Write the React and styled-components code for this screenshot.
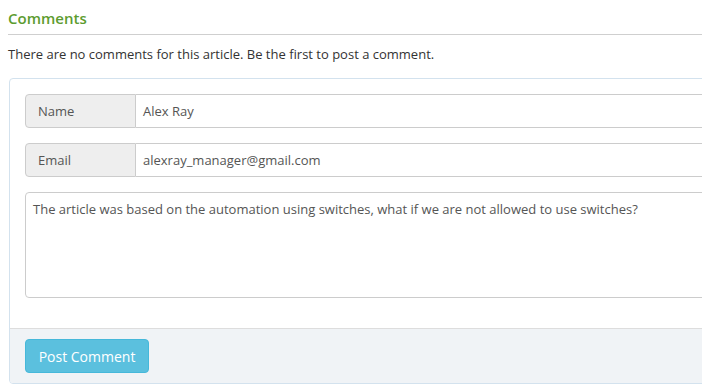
import React from "react";
import styled, { createGlobalStyle } from "styled-components";

const GlobalStyle = createGlobalStyle`
  html, body {
    margin: 0;
    padding: 0;
    overflow: hidden;
    background: #fff;
  }
  body {
    font-family: "Open Sans", "Liberation Sans", sans-serif;
    font-size: 13px;
    color: #333;
  }
`;

const Section = styled.section`
  width: 760px;
  padding: 6px 0 0 8px;
`;

const Title = styled.h3`
  margin: 0;
  padding: 2px 0 6px;
  font-size: 15px;
  font-weight: 600;
  color: #5d9c2f;
  border-bottom: 1px solid #cfcfcf;
  width: 694px;
`;

const Notice = styled.p`
  margin: 9px 0 0;
  line-height: 20px;
  color: #333;
`;

const Panel = styled.div`
  margin: 14px 0 0 1px;
  border: 1px solid #d3e2ee;
  border-radius: 4px;
  background: #fff;
  overflow: hidden;
`;

const PanelBody = styled.div`
  padding: 15px;
  display: flex;
  flex-direction: column;
  gap: 15px;
`;

const InputGroup = styled.div`
  display: flex;
  height: 34px;
`;

const Addon = styled.span`
  box-sizing: border-box;
  width: 111px;
  padding: 0 12px;
  display: flex;
  align-items: center;
  background: #eeeeee;
  border: 1px solid #cccccc;
  border-radius: 4px 0 0 4px;
  color: #555;
  font-size: 13px;
`;

const Field = styled.div`
  flex: 1;
  box-sizing: border-box;
  display: flex;
  align-items: center;
  padding: 0 7px;
  border: 1px solid #cccccc;
  border-left: none;
  border-radius: 0 4px 4px 0;
  color: #555;
  font-size: 13px;
`;

const TextArea = styled.div`
  box-sizing: border-box;
  height: 106px;
  padding: 7px 7px;
  border: 1px solid #cccccc;
  border-radius: 4px;
  color: #555;
  font-size: 13px;
  line-height: 18px;
  margin-bottom: 15px;
`;

const PanelFooter = styled.div`
  padding: 10px 15px;
  background: #f0f3f6;
  border-top: 1px solid #dddddd;
`;

const Button = styled.button`
  box-sizing: border-box;
  height: 34px;
  width: 124px;
  padding: 0 12px;
  background: #5bc0de;
  border: 1px solid #46b8da;
  border-radius: 4px;
  color: #fff;
  font-family: "Open Sans", "Liberation Sans", sans-serif;
  font-size: 14px;
  cursor: pointer;
`;

export default function App() {
  return (
    <>
      <GlobalStyle />
      <Section>
        <Title>Comments</Title>
        <Notice>There are no comments for this article. Be the first to post a comment.</Notice>
        <Panel>
          <PanelBody>
            <InputGroup>
              <Addon>Name</Addon>
              <Field>Alex Ray</Field>
            </InputGroup>
            <InputGroup>
              <Addon>Email</Addon>
              <Field>alexray_manager@gmail.com</Field>
            </InputGroup>
            <TextArea>
              The article was based on the automation using switches, what if we are not allowed to use switches?
            </TextArea>
          </PanelBody>
          <PanelFooter>
            <Button>Post Comment</Button>
          </PanelFooter>
        </Panel>
      </Section>
    </>
  );
}
